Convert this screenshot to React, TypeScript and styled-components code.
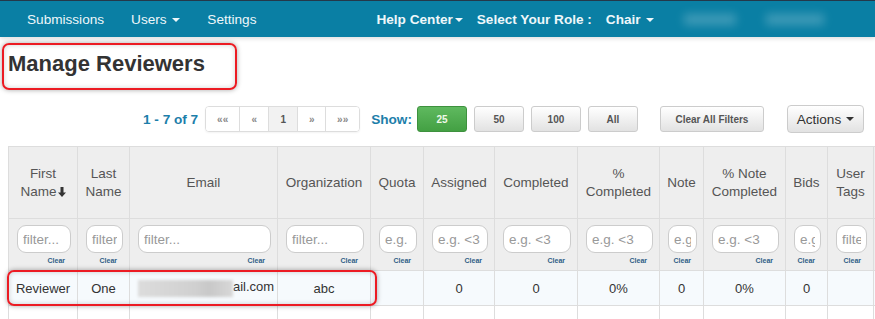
import styled, { createGlobalStyle } from "styled-components";

const GlobalStyle = createGlobalStyle`
  body {
    margin: 0;
    background: #fff;
    font-family: "Liberation Sans", Arial, sans-serif;
    overflow: hidden;
  }
`;

const columns = [
  { key: "first", label: "First Name", width: 69, ph: "filter...", sort: true },
  { key: "last", label: "Last Name", width: 52, ph: "filter..." },
  { key: "email", label: "Email", width: 148, ph: "filter..." },
  { key: "org", label: "Organization", width: 93, ph: "filter..." },
  { key: "quota", label: "Quota", width: 53, ph: "e.g. <3" },
  { key: "assigned", label: "Assigned", width: 71, ph: "e.g. <3" },
  { key: "completed", label: "Completed", width: 83, ph: "e.g. <3" },
  { key: "pct", label: "% Completed", width: 82, ph: "e.g. <3" },
  { key: "note", label: "Note", width: 44, ph: "e.g. <3" },
  { key: "pctNote", label: "% Note Completed", width: 82, ph: "e.g. <3" },
  { key: "bids", label: "Bids", width: 42, ph: "e.g. <3" },
  { key: "tags", label: "User Tags", width: 46, ph: "filter..." },
  { key: "extra", label: "", width: 80, ph: "" },
];

const rows = [
  ["Reviewer", "One", "ail.com", "abc", "", "0", "0", "0%", "0", "0%", "0", "", ""],
  ["Misty", "Flit", "mflit@contest.com", "", "", "0", "0", "0%", "0", "0%", "0", "", ""],
];

const App = () => {
  return (
    <>
      <GlobalStyle />
      <NavBar>
        <NavGroup>
          <NavLink>Submissions</NavLink>
          <NavLink>
            Users <Caret />
          </NavLink>
          <NavLink>Settings</NavLink>
        </NavGroup>
        <RightGroup>
          <NavLink $bold>
            Help Center<Caret />
          </NavLink>
          <NavLink $bold>Select Your Role :</NavLink>
          <NavLink $bold>
            Chair <Caret />
          </NavLink>
          <BlurredName $width={52} />
          <BlurredName $width={58} />
        </RightGroup>
      </NavBar>

      <Page>
        <Highlight style={{ left: 2, top: 6, width: 235, height: 47 }} />
        <Title>Manage Reviewers</Title>

        <Toolbar>
          <PageCount>1 - 7 of 7</PageCount>
          <Pager>
            <PagerItem $w={33}>««</PagerItem>
            <PagerItem $w={29}>«</PagerItem>
            <PagerItem $w={29} $active>1</PagerItem>
            <PagerItem $w={28}>»</PagerItem>
            <PagerItem $w={34}>»»</PagerItem>
          </Pager>
          <ShowLabel>Show:</ShowLabel>
          <SizeGroup>
            <SizeButton $active>25</SizeButton>
            <SizeButton>50</SizeButton>
            <SizeButton>100</SizeButton>
            <SizeButton>All</SizeButton>
          </SizeGroup>
          <ClearButton>Clear All Filters</ClearButton>
          <ActionsButton>
            Actions <Caret $dark />
          </ActionsButton>
        </Toolbar>

        <TableWrap>
          <Highlight style={{ left: -1, top: 124, width: 370, height: 36 }} />
          <Table>
            <colgroup>
              {columns.map((c) => (
                <col key={c.key} style={{ width: c.width }} />
              ))}
            </colgroup>
            <thead>
              <HeadRow>
                {columns.map((c) => (
                  <HeadCell key={c.key}>
                    {c.label}
                    {c.sort && <SortArrow />}
                  </HeadCell>
                ))}
              </HeadRow>
              <FilterRow>
                {columns.map((c) => (
                  <FilterCell key={c.key}>
                    {c.ph && (
                      <>
                        <FilterInput placeholder={c.ph} />
                        <ClearLink>Clear</ClearLink>
                      </>
                    )}
                  </FilterCell>
                ))}
              </FilterRow>
            </thead>
            <tbody>
              {rows.map((r, i) => (
                <BodyRow key={i} $striped={i % 2 === 0}>
                  {r.map((v, j) =>
                    j === 2 ? (
                      <EmailCell key={j}>
                        {i === 0 && <Redacted />}
                        {v}
                      </EmailCell>
                    ) : (
                      <Cell key={j}>{v}</Cell>
                    )
                  )}
                </BodyRow>
              ))}
            </tbody>
          </Table>
        </TableWrap>
      </Page>
    </>
  );
};

export default App;

const SortArrow = () => (
  <svg width="8" height="10" viewBox="0 0 8 10" style={{ marginLeft: 1, verticalAlign: -1 }}>
    <path d="M2.5 0h3v5.5H8L4 10 0 5.5h2.5z" fill="#333" />
  </svg>
);

const NavBar = styled.div`
  height: 36px;
  display: flex;
  align-items: center;
  border-top: 1px solid #24384a;
  background: #0a7fa4;
  box-shadow: 0 2px 4px rgba(0, 0, 0, 0.12);
  color: #eef7fa;
  font-size: 13.6px;
`;

const NavGroup = styled.div`
  display: flex;
  align-items: center;
  gap: 27px;
  padding-left: 27px;
`;

const RightGroup = styled.div`
  display: flex;
  align-items: center;
  gap: 14px;
  margin-left: 120px;
`;

const NavLink = styled.span<{ $bold?: boolean }>`
  font-weight: ${({ $bold }) => ($bold ? 700 : 400)};
  white-space: nowrap;
`;

const Caret = styled.span<{ $dark?: boolean }>`
  display: inline-block;
  width: 0;
  height: 0;
  margin-left: 2px;
  vertical-align: middle;
  border-top: 4px solid ${({ $dark }) => ($dark ? "#333" : "#eef7fa")};
  border-left: 4px solid transparent;
  border-right: 4px solid transparent;
`;

const BlurredName = styled.span<{ $width: number }>`
  display: inline-block;
  width: ${({ $width }) => $width}px;
  height: 11px;
  margin-left: 16px;
  background: rgba(255, 255, 255, 0.22);
  filter: blur(5px);
`;

const Page = styled.div`
  position: relative;
  padding: 15px 0 0 8px;
`;

const Highlight = styled.div`
  position: absolute;
  z-index: 2;
  box-sizing: border-box;
  border: 2px solid #ec1b23;
  border-radius: 7px;
  box-shadow: 0 0 5px rgba(0, 0, 0, 0.35), inset 0 0 5px rgba(0, 0, 0, 0.18);
  pointer-events: none;
`;

const Title = styled.h1`
  margin: 0;
  font-size: 22px;
  line-height: 24px;
  font-weight: 700;
  color: #333;
`;

const Toolbar = styled.div`
  display: flex;
  align-items: center;
  height: 28px;
  margin-top: 29px;
  padding-left: 135px;
`;

const PageCount = styled.span`
  font-size: 13.6px;
  font-weight: 700;
  color: #1c7eaa;
  margin-right: 7px;
`;

const Pager = styled.div`
  display: flex;
  height: 26px;
  box-sizing: border-box;
  border: 1px solid #ddd;
  border-radius: 4px;
  overflow: hidden;
  box-shadow: 0 1px 2px rgba(0, 0, 0, 0.05);
`;

const PagerItem = styled.span<{ $w: number; $active?: boolean }>`
  box-sizing: border-box;
  width: ${({ $w }) => $w}px;
  display: flex;
  align-items: center;
  justify-content: center;
  font-size: 10px;
  font-weight: 700;
  color: ${({ $active }) => ($active ? "#555" : "#888")};
  background: ${({ $active }) => ($active ? "#f2f2f2" : "#fff")};
  & + & {
    border-left: 1px solid #ddd;
  }
`;

const ShowLabel = styled.span`
  margin-left: 11px;
  font-size: 13.6px;
  font-weight: 700;
  color: #1c7eaa;
`;

const SizeGroup = styled.div`
  display: flex;
  gap: 7px;
  margin-left: 5px;
`;

const buttonBase = `
  box-sizing: border-box;
  display: flex;
  align-items: center;
  justify-content: center;
  border: 1px solid #ccc;
  border-radius: 3px;
  background: linear-gradient(#ffffff, #e2e2e2);
  font-family: "Liberation Sans", Arial, sans-serif;
  color: #555;
`;

const SizeButton = styled.span<{ $active?: boolean }>`
  ${buttonBase}
  width: 50px;
  height: 26px;
  font-size: 10px;
  font-weight: 700;
  ${({ $active }) =>
    $active &&
    `
    background: linear-gradient(#5fb95f, #43a043);
    border-color: #3e913e;
    color: #eef8e8;
  `}
`;

const ClearButton = styled.span`
  ${buttonBase}
  width: 104px;
  height: 26px;
  margin-left: 22px;
  font-size: 10px;
  font-weight: 700;
`;

const ActionsButton = styled.span`
  ${buttonBase}
  width: 77px;
  height: 28px;
  margin-left: 23px;
  gap: 3px;
  border-radius: 4px;
  font-size: 13.6px;
  color: #333;
`;

const TableWrap = styled.div`
  position: relative;
  margin-top: 13px;
`;

const Table = styled.table`
  table-layout: fixed;
  width: 945px;
  border-collapse: collapse;
  border: 1px solid #ddd;
  font-size: 13.5px;
`;

const HeadRow = styled.tr`
  height: 72px;
  background: #eee;
`;

const HeadCell = styled.th`
  padding: 0 2px;
  border: 1px solid #ddd;
  font-weight: 400;
  line-height: 18px;
  color: #555;
  text-align: center;
  vertical-align: middle;
  overflow: hidden;
`;

const FilterRow = styled.tr`
  height: 52px;
  background: #eee;
`;

const FilterCell = styled.th`
  padding: 0 6px 0 8px;
  border: 1px solid #ddd;
  vertical-align: top;
  font-weight: 400;
`;

const FilterInput = styled.input`
  display: block;
  box-sizing: border-box;
  width: 100%;
  height: 28px;
  margin-top: 6px;
  padding: 0 5px;
  border: 1px solid #ccc;
  border-radius: 9px;
  background: #fff;
  font-family: "Liberation Sans", Arial, sans-serif;
  font-size: 13.5px;
  color: #555;
  outline: none;
  &::placeholder {
    color: #999;
  }
`;

const ClearLink = styled.span`
  display: block;
  margin-top: 3px;
  padding-right: 6px;
  text-align: right;
  font-size: 7px;
  font-weight: 700;
  line-height: 9px;
  color: #2f5f86;
`;

const BodyRow = styled.tr<{ $striped?: boolean }>`
  height: 35px;
  background: ${({ $striped }) => ($striped ? "#f6fafd" : "#fff")};
`;

const Cell = styled.td`
  padding: 0 4px;
  border: 1px solid #ddd;
  text-align: center;
  color: #333;
  font-size: 13px;
  white-space: nowrap;
  overflow: hidden;
`;

const EmailCell = styled(Cell)`
  padding-left: 8px;
  text-align: left;
`;

const Redacted = styled.span`
  display: inline-block;
  width: 95px;
  height: 17px;
  vertical-align: middle;
  background: linear-gradient(90deg, #dcdcdc, #d0d0d0 60%, #c8c8c8 75%, #d8d8d8);
  filter: blur(1.5px);
`;
